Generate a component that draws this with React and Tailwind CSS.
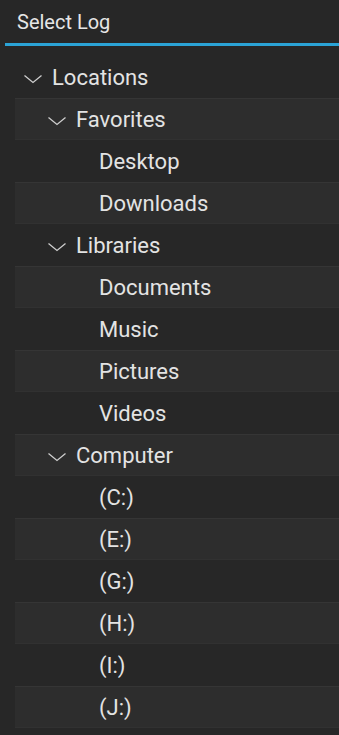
const tree = [
    { label: 'Locations', depth: 0, folder: true },
    { label: 'Favorites', depth: 1, folder: true },
    { label: 'Desktop', depth: 2 },
    { label: 'Downloads', depth: 2 },
    { label: 'Libraries', depth: 1, folder: true },
    { label: 'Documents', depth: 2 },
    { label: 'Music', depth: 2 },
    { label: 'Pictures', depth: 2 },
    { label: 'Videos', depth: 2 },
    { label: 'Computer', depth: 1, folder: true },
    { label: '(C:)', depth: 2 },
    { label: '(E:)', depth: 2 },
    { label: '(G:)', depth: 2 },
    { label: '(H:)', depth: 2 },
    { label: '(I:)', depth: 2 },
    { label: '(J:)', depth: 2 },
];

// indent relative to the 15px row inset
const pad = ['pl-[8px]', 'pl-[32px]', 'pl-[84px]'];

const Chevron = () => (
    <svg width="20" height="10" viewBox="0 0 20 10" fill="none" className="shrink-0 mr-[9px] mt-[2px]">
        <path d="M1.5 1.5 L10 8.5 L18.5 1.5" stroke="#cfcfcf" strokeWidth="1.3" />
    </svg>
);

const App = () => {
    return (
        <div className="w-[339px] h-[735px] bg-[#272727] overflow-hidden" style={{ fontFamily: 'Roboto, "Liberation Sans", sans-serif' }}>
            {/* Header */}
            <div className="h-[43px] pl-[17px] pt-[7px] text-[20px] text-[#e6e6e6]">Select Log</div>
            <div className="ml-[5px] h-[3px] bg-[#2ba3d6]" />

            {/* Tree */}
            <div className="mt-[10px]">
                {tree.map((item, i) => (
                    <div
                        key={item.label}
                        className={
                            'ml-[15px] h-[42px] flex items-center pt-[1px] text-[22px] text-[#e3e3e3] ' +
                            pad[item.depth] +
                            (i % 2 === 1 ? ' bg-[#2d2d2d] border-t border-b border-t-[#353535] border-b-[#313131]' : '')
                        }
                    >
                        {item.folder && <Chevron />}
                        <span>{item.label}</span>
                    </div>
                ))}
            </div>
        </div>
    );
};

export default App;
